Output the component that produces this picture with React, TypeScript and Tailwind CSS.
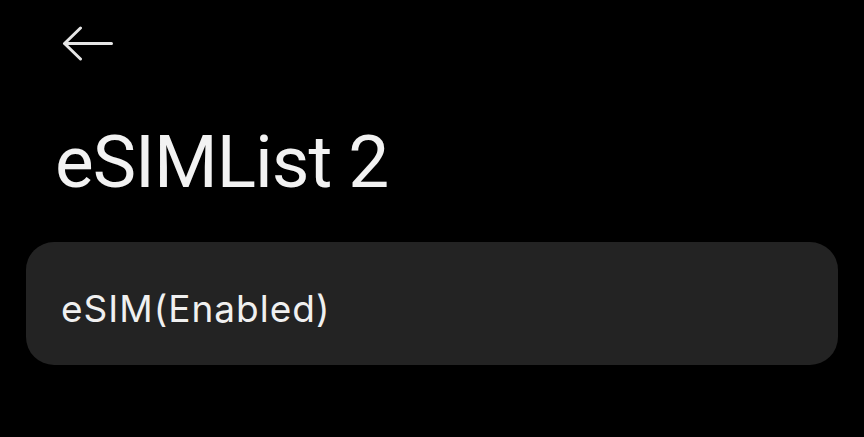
import React from "react";

export default function App() {
  return (
    <div className="w-[864px] h-[437px] bg-black overflow-hidden" style={{ fontFamily: "Inter, 'Noto Sans', sans-serif" }}>
      <div className="pt-[26px] pl-[62px] h-[36px] box-content">
        <svg width="52" height="36" viewBox="0 0 52 36" fill="none">
          <path d="M49.5 17.5H2.5M18.5 2L2.5 17.5l16 15.5" stroke="#e6e6e6" strokeWidth="3" strokeLinecap="round" strokeLinejoin="round" />
        </svg>
      </div>
      <div
        className="pl-[55px] mt-[60px] text-[73px] leading-[80px] text-[#f2f2f2] tracking-[-1px]"
        style={{ fontFamily: "Roboto, 'Noto Sans', sans-serif" }}
      >
        eSIMList 2
      </div>
      <div className="mx-[26px] mt-[40px] h-[123px] rounded-[28px] bg-[#232323] flex items-center pl-[35px] pt-[10px]">
        <span className="text-[37px] leading-[40px] text-[#f0f0f0] tracking-[1px]">eSIM(Enabled)</span>
      </div>
    </div>
  );
}
